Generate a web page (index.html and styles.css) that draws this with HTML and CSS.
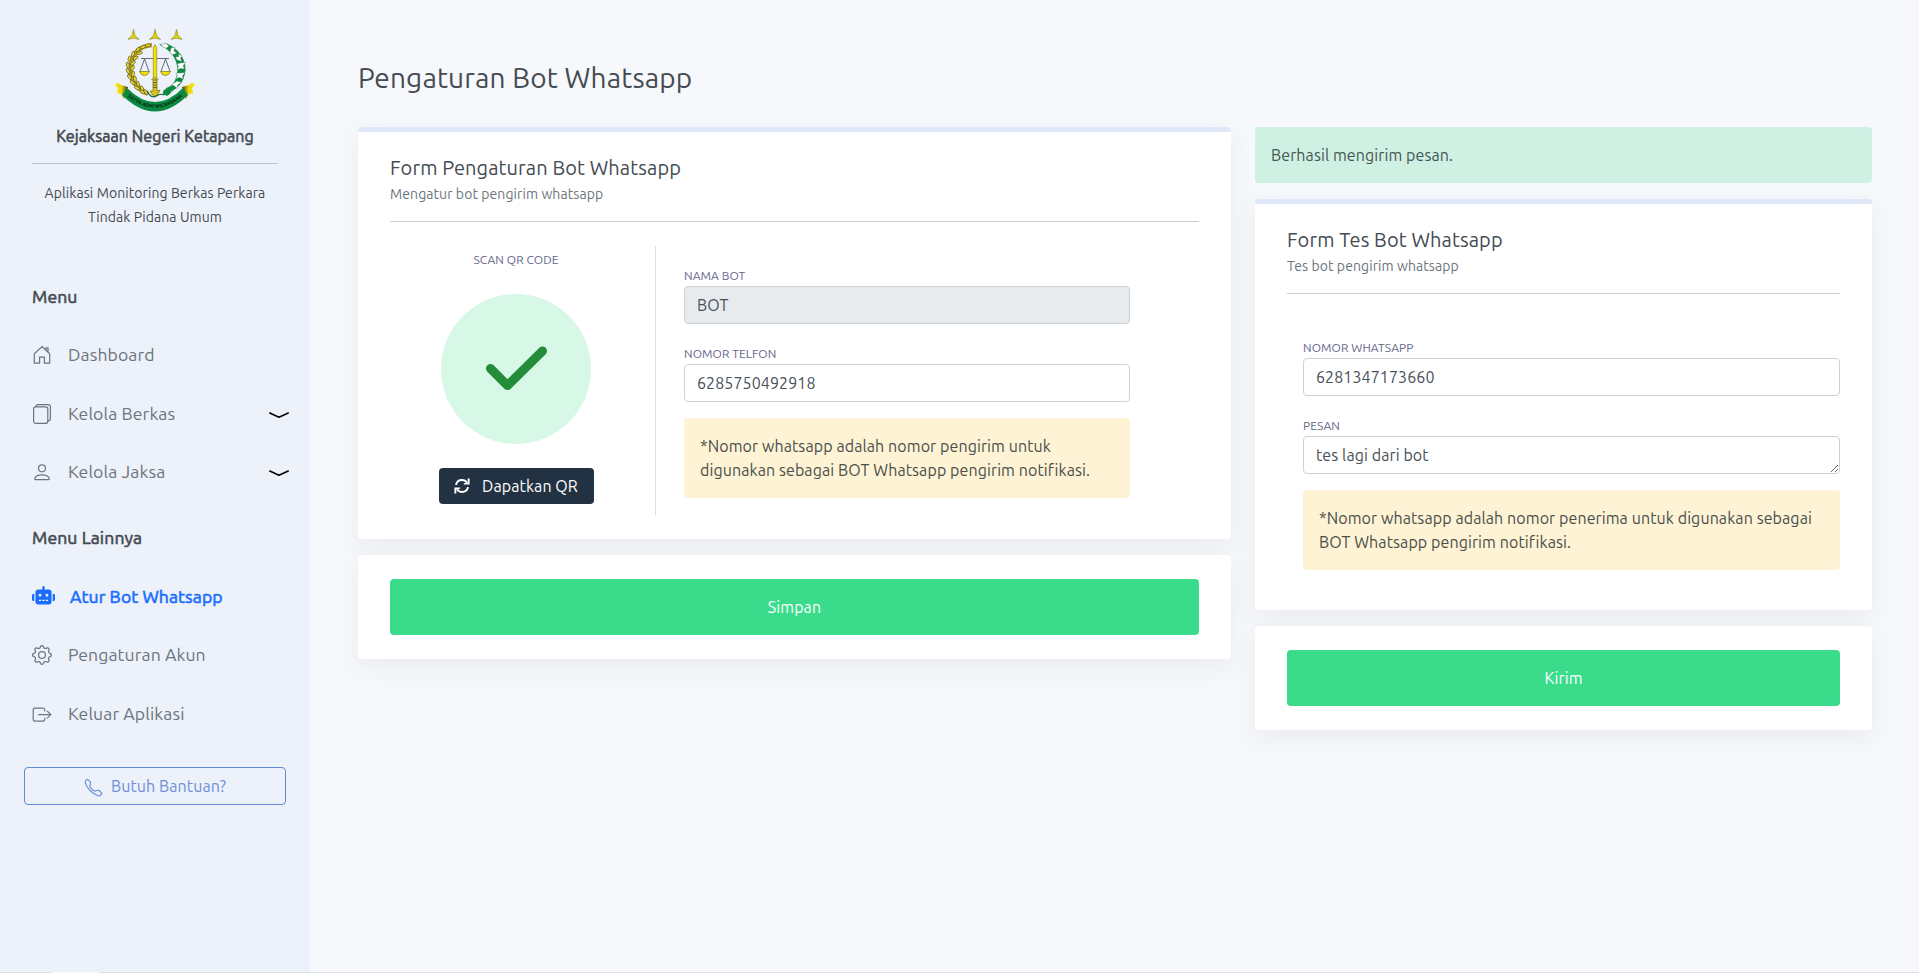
FILE: index.html
```html
<!DOCTYPE html>
<html lang="id">
<head>
<meta charset="utf-8">
<title>Pengaturan Bot Whatsapp</title>
<link rel="stylesheet" href="styles.css">
</head>
<body>
<div class="app">
  <aside class="sidebar">
    <header class="brand">
      <svg class="emblem" viewBox="0 0 82 84" width="82" height="84">
        <defs>
          <g id="star"><path d="M0-5.6 1.600 .8 5.600 4.400 0 3.200-5.600 4.400-1.600 .8Z" fill="#f2e200" stroke="#6b6a22" stroke-width=".5"/><path d="M0-4V1.200L-4 3.600M0 1.200 4 3.600" fill="none" stroke="#a39c1c" stroke-width=".4"/></g>
          <g id="grain"><ellipse rx="2.900" ry="1.400" fill="#ead82a" stroke="#4a4520" stroke-width=".6"/></g>
          <path id="motto" d="M10 65.500Q41 94 72 65.500"/>
          <linearGradient id="curlL"><stop offset="0" stop-color="#f6e800"/><stop offset=".5" stop-color="#e8d510"/><stop offset="1" stop-color="#3b3810"/></linearGradient>
          <linearGradient id="curlR"><stop offset="0" stop-color="#3b3810"/><stop offset=".5" stop-color="#e8d510"/><stop offset="1" stop-color="#f6e800"/></linearGradient>
        </defs>
        <use href="#star" x="19.500" y="7"/><use href="#star" x="41" y="7"/><use href="#star" x="62.500" y="7"/>
        <path d="M38 17Q17 19 16.500 42 17.500 58 34 66" fill="none" stroke="#b3a32a" stroke-width="4.500"/>
        <g>
          <use href="#grain" transform="translate(34 17.500) rotate(-14)"/><use href="#grain" transform="translate(29 19) rotate(-30)"/>
          <use href="#grain" transform="translate(24 21.500) rotate(-55)"/><use href="#grain" transform="translate(25.500 25) rotate(-15)"/>
          <use href="#grain" transform="translate(19 26) rotate(-70)"/><use href="#grain" transform="translate(21.500 30) rotate(-28)"/>
          <use href="#grain" transform="translate(15.500 31) rotate(-85)"/><use href="#grain" transform="translate(19 35) rotate(-45)"/>
          <use href="#grain" transform="translate(13.800 37) rotate(75)"/><use href="#grain" transform="translate(18.500 40) rotate(-60)"/>
          <use href="#grain" transform="translate(14 43) rotate(65)"/><use href="#grain" transform="translate(19 46) rotate(-75)"/>
          <use href="#grain" transform="translate(15.500 49) rotate(55)"/><use href="#grain" transform="translate(21 51) rotate(88)"/>
          <use href="#grain" transform="translate(18.500 54.500) rotate(42)"/><use href="#grain" transform="translate(24 56) rotate(75)"/>
          <use href="#grain" transform="translate(23 60) rotate(35)"/><use href="#grain" transform="translate(28 60.500) rotate(62)"/>
          <use href="#grain" transform="translate(28.500 64) rotate(28)"/><use href="#grain" transform="translate(32 64) rotate(48)"/>
        </g>
        <path d="M45 16.500 53 15.500Q71 24 71.500 42 70 60 50 67L49 63Q63 57 63.500 42 63 25 45 16.500Z" fill="#0c8a41"/>
        <g fill="#fff" stroke="#3d7355" stroke-width=".4">
          <path id="boll" d="M46 16.500 52 15.500 55 18 52 20.500Z"/>
          <path d="M57 20 61 19 60 23 63 25 58 27 56 24ZM64 25.500 68 28 66.500 30.500 68 33.500 63 32 61.500 29 65 28.500ZM66 35 71.500 34.500 69 38 71 41 66.500 40.500 63 42 64.500 38.500 63 36ZM66 45 71 44.500 68.500 48 69.500 51 65 49.500 61.500 51 63.500 47.500 62 45ZM63 53 67.500 54.500 64 56.500 63 60.500 60 57.500 56.500 57.500 60 55ZM55 60 59 63 55.500 65 52 64Z"/>
        </g>
        <path d="M49 66Q50 60 56 58.500 61 63 53 68Z" fill="#0c8a41"/>
        <path d="M27 30.500H55M30.500 31 26 43.500M30.500 31 35 43.500M51.500 31 47 43.500M51.500 31 56 43.500" fill="none" stroke="#444a50" stroke-width=".8"/>
        <path d="M25.500 43.500H35.500Q34 47.500 30.500 47.500T25.500 43.500ZM46.500 43.500H56.500Q55 47.500 51.500 47.500T46.500 43.500Z" fill="#f2e200" stroke="#77731c" stroke-width=".7"/>
        <path d="M39.300 20 41 16.500 42.700 20V50H39.300Z" fill="#f2e200" stroke="#8a7a18" stroke-width=".6"/>
        <path d="M37.500 51.500 39 50H43L44.500 51.500Z" fill="#e8d510" stroke="#77731c" stroke-width=".5"/>
        <path d="M39 52H43V63L46 62 43.500 67 41 69 38.500 67 36 63 39 63Z" fill="#d8c414" stroke="#5b5420" stroke-width=".6"/>
        <path d="M39 54.500H43M39 57H43M39 59.500H43" stroke="#5b5420" stroke-width=".8"/>
        <path d="M33 63Q37 71 42 68T50 67" fill="none" stroke="#0b5f30" stroke-width="1.100"/>
        <path d="M1 57Q3 53 7 57L14 59 10 71 7 66 3 65 4 60Z" fill="url(#curlL)"/>
        <path d="M81 57Q79 53 75 57L68 59 72 71 75 66 79 65 78 60Z" fill="url(#curlR)"/>
        <path d="M13 60Q41 88 69 60L74 67Q41 100 8 67Z" fill="#0c8a41"/>
        <text class="motto"><textPath href="#motto" startOffset="50%" text-anchor="middle">SATYA ADHI WICAKSANA</textPath></text>
      </svg>
      <div class="brand-name bold">Kejaksaan Negeri Ketapang</div>
      <div class="brand-desc">Aplikasi Monitoring Berkas Perkara Tindak Pidana Umum</div>
    </header>

    <div class="menu-title bold">Menu</div>
    <nav class="menu">
      <a class="item"><svg class="icon" viewBox="0 0 20 20"><path d="M2.300 18.200V8.700L10 1.500l7.700 7.200v9.500h-5.300v-6h-4.800v6zM14 5V2.800h2V7"/></svg>Dashboard</a>
      <a class="item"><svg class="icon" viewBox="0 0 20 20"><rect x="1.600" y="2.900" width="14.200" height="16.500" rx="2.200"/><path d="M4 2.900C4 1.500 5 .6 6.200.6h9.800c1.300 0 2.400 1 2.400 2.400v11.500c0 1.400-1 2.400-2.500 2.400"/></svg>Kelola Berkas<svg class="chevron" viewBox="0 0 20 7"><path d="M.8 1 10 5.300 19.200 1"/></svg></a>
      <a class="item"><svg class="icon" viewBox="0 0 20 20"><circle cx="10" cy="6.300" r="3.500"/><path d="M3.400 17.600c-.7 0-.8-.6-.6-1.300.6-2 3.500-3.400 7.200-3.400s6.600 1.400 7.200 3.400c.2.700 0 1.300-.6 1.300z"/></svg>Kelola Jaksa<svg class="chevron" viewBox="0 0 20 7"><path d="M.8 1 10 5.300 19.200 1"/></svg></a>
    </nav>

    <div class="menu-title second bold">Menu Lainnya</div>
    <nav class="menu">
      <a class="item active bold"><svg class="robot" viewBox="0 0 640 512"><path d="M32,224H64V416H32A31.966,31.966,0,0,1,0,384V256A31.966,31.966,0,0,1,32,224Zm512-48V448a64.063,64.063,0,0,1-64,64H160a64.063,64.063,0,0,1-64-64V176a79.974,79.974,0,0,1,80-80H288V32a32,32,0,0,1,64,0V96H464A79.974,79.974,0,0,1,544,176ZM264,256a40,40,0,1,0-40,40A39.997,39.997,0,0,0,264,256Zm-8,128H192v32h64Zm96,0H288v32h64ZM456,256a40,40,0,1,0-40,40A39.997,39.997,0,0,0,456,256Zm-8,128H384v32h64ZM640,256V384a31.966,31.966,0,0,1-32,32H576V224h32A31.966,31.966,0,0,1,640,256Z"/></svg>Atur Bot Whatsapp</a>
      <a class="item"><svg class="icon solid" viewBox="0 0 16 16"><path d="M8 4.754a3.246 3.246 0 1 0 0 6.492 3.246 3.246 0 0 0 0-6.492zM5.754 8a2.246 2.246 0 1 1 4.492 0 2.246 2.246 0 0 1-4.492 0z"/><path d="M9.796 1.343c-.527-1.790-3.065-1.790-3.592 0l-.094.319a.873.873 0 0 1-1.255.520l-.292-.160c-1.640-.892-3.433.902-2.540 2.541l.159.292a.873.873 0 0 1-.520 1.255l-.319.094c-1.790.527-1.790 3.065 0 3.592l.319.094a.873.873 0 0 1 .520 1.255l-.160.292c-.892 1.640.901 3.434 2.541 2.540l.292-.159a.873.873 0 0 1 1.255.520l.094.319c.527 1.790 3.065 1.790 3.592 0l.094-.319a.873.873 0 0 1 1.255-.520l.292.160c1.640.893 3.434-.902 2.540-2.541l-.159-.292a.873.873 0 0 1 .520-1.255l.319-.094c1.790-.527 1.790-3.065 0-3.592l-.319-.094a.873.873 0 0 1-.520-1.255l.160-.292c.893-1.640-.902-3.433-2.541-2.540l-.292.159a.873.873 0 0 1-1.255-.520l-.094-.319zm-2.633.283c.246-.835 1.428-.835 1.674 0l.094.319a1.873 1.873 0 0 0 2.693 1.115l.291-.160c.764-.415 1.600.420 1.184 1.185l-.159.292a1.873 1.873 0 0 0 1.116 2.692l.318.094c.835.246.835 1.428 0 1.674l-.319.094a1.873 1.873 0 0 0-1.115 2.693l.160.291c.415.764-.420 1.600-1.185 1.184l-.291-.159a1.873 1.873 0 0 0-2.693 1.116l-.094.318c-.246.835-1.428.835-1.674 0l-.094-.319a1.873 1.873 0 0 0-2.692-1.115l-.292.160c-.764.415-1.600-.420-1.184-1.185l.159-.291A1.873 1.873 0 0 0 1.945 8.930l-.319-.094c-.835-.246-.835-1.428 0-1.674l.319-.094A1.873 1.873 0 0 0 3.060 4.377l-.160-.292c-.415-.764.420-1.600 1.185-1.184l.292.159a1.873 1.873 0 0 0 2.692-1.115l.094-.319z"/></svg>Pengaturan Akun</a>
      <a class="item"><svg class="icon" viewBox="0 0 20 20"><path d="M12.800 7.500V6c0-1.200-.6-1.900-1.800-1.900H3C1.800 4.100 1.200 4.800 1.200 6v9.300c0 1.200.6 1.900 1.800 1.900h8c1.200 0 1.800-.7 1.800-1.900v-1.600M6.200 10.600h12.400M15 6.800l3.800 3.800-3.800 3.800"/></svg>Keluar Aplikasi</a>
    </nav>

    <a class="help"><svg class="phone" viewBox="0 0 16 16"><path d="M3.600 1.500c-.4-.5-1-.5-1.400-.1L1.500 2.300c-.5.500-.6 1.200-.4 1.800a17.500 17.500 0 0 0 4.200 6.600 17.500 17.500 0 0 0 6.600 4.200c.6.200 1.300 0 1.800-.4l1-1c.4-.4.300-1-.1-1.300l-2.300-1.800c-.2-.1-.5-.2-.8-.1l-2 .5c-.6.200-1.300 0-1.700-.4L5.500 8.100c-.5-.5-.6-1.100-.5-1.700l.5-2.100c.1-.3 0-.6-.1-.8z"/></svg>Butuh Bantuan?</a>
  </aside>

  <main class="main">
    <h1 class="page-title">Pengaturan Bot Whatsapp</h1>
    <div class="columns">
      <div class="col-wide">
        <section class="card topped">
          <h2 class="card-title">Form Pengaturan Bot Whatsapp</h2>
          <p class="card-sub">Mengatur bot pengirim whatsapp</p>
          <div class="split">
            <div class="qr">
              <div class="label">SCAN QR CODE</div>
              <div class="circle"><svg viewBox="0 0 150 150"><path d="M49.500 74.500 66.500 91.500 101.500 57"/></svg></div>
              <button class="qr-btn"><svg viewBox="0 0 16 16"><path d="M2 6.900C2.600 3.900 5 2 8 2c2.200 0 3.900 1 5 2.700M14 9.100C13.400 12.100 11 14 8 14c-2.200 0-3.900-1-5-2.700"/><path class="head" d="M15.600.4v6H9.800V5.200l3.900-.4V.4zM.4 15.600v-6h5.800v1.200l-3.900.4v4.400z"/></svg>Dapatkan QR</button>
            </div>
            <div class="fields">
              <label class="label">NAMA BOT</label>
              <div class="input disabled">BOT</div>
              <label class="label">NOMOR TELFON</label>
              <div class="input">6285750492918</div>
              <div class="alert warning">*Nomor whatsapp adalah nomor pengirim untuk digunakan sebagai BOT Whatsapp pengirim notifikasi.</div>
            </div>
          </div>
        </section>
        <section class="card action"><button class="submit">Simpan</button></section>
      </div>

      <div class="col-narrow">
        <div class="alert success">Berhasil mengirim pesan.</div>
        <section class="card topped">
          <h2 class="card-title">Form Tes Bot Whatsapp</h2>
          <p class="card-sub">Tes bot pengirim whatsapp</p>
          <div class="fields test">
            <label class="label">NOMOR WHATSAPP</label>
            <div class="input">6281347173660</div>
            <label class="label">PESAN</label>
            <textarea class="input" rows="1">tes lagi dari bot</textarea>
            <div class="alert warning">*Nomor whatsapp adalah nomor penerima untuk digunakan sebagai BOT Whatsapp pengirim notifikasi.</div>
          </div>
        </section>
        <section class="card action"><button class="submit">Kirim</button></section>
      </div>
    </div>
  </main>
</div>
<div class="bottom-line"></div>
</body>
</html>
```
FILE: styles.css
```css
* { box-sizing: border-box; }
body { margin: 0; font: 16px/24px Ubuntu, "Noto Sans", sans-serif; color: #444b52; background: #f6f8fc; overflow: hidden; }
.app { display: flex; height: 972px; }
.app * { letter-spacing: .0058em; }
.bottom-line { height: 1px; background: linear-gradient(90deg, #dcdee2 51px, #f6f8fc 51px 99px, #dcdee2 99px); }
.bold { -webkit-text-stroke: .6px currentColor; }
h1, h2, p { margin: 0; font-weight: 400; }

.sidebar { width: 310px; flex: none; background: #ecf1fa; padding: 28px 24px 0; display: flex; flex-direction: column; }
.brand { display: flex; flex-direction: column; align-items: center; text-align: center; padding: 0 8px; }
.emblem { display: block; }
.app .motto { font-size: 5px; font-weight: 700; fill: #042410; letter-spacing: .3px; }
.brand-name { margin-top: 12px; }
.brand-desc { align-self: stretch; margin-top: 15px; padding-top: 17px; border-top: 1px solid #bfc4cd; font-size: 14px; }
.menu-title { margin: 55px 0 0 8px; font-size: 17.600px; line-height: 26px; }
.menu-title.second { margin-top: 40px; }
.menu { display: flex; flex-direction: column; gap: 32.300px; margin: 32.300px -3px 0 8px; }
.second + .menu { margin-top: 33.300px; }
.item { display: flex; align-items: center; height: 26px; font-size: 17.600px; color: #6c757d; }
.icon { width: 20px; height: 20px; margin-right: 16px; fill: none; stroke: currentColor; stroke-width: 1.200; overflow: visible; }
.icon.solid { fill: currentColor; stroke: none; }
.chevron { width: 20px; height: 7px; margin: 3px 0 0 auto; fill: none; stroke: #000; stroke-width: 1.600; stroke-linecap: round; stroke-linejoin: round; }
.active { color: #1a6dff; }
.robot { width: 23px; height: 18.400px; margin: -3px 15px 0 0; fill: currentColor; }
.help { display: flex; align-items: center; justify-content: center; height: 38px; margin-top: 40px; border: 1px solid #5f8bd3; border-radius: 4px; color: #6f8fdb; }
.phone { width: 19px; height: 19px; margin: 4px 8px 0 0; fill: none; stroke: currentColor; stroke-width: 1; }

.main { flex: 1; padding: 57px 47px 0 48px; }
.page-title { font-size: 28px; line-height: 42px; }
.columns { display: flex; align-items: flex-start; gap: 24px; margin-top: 28px; }
.col-wide { width: 873px; }
.col-narrow { width: 617px; }
.col-wide, .col-narrow { display: flex; flex-direction: column; gap: 16px; }
.card { padding: 24px 32px; background: #fff; border-radius: 4px; box-shadow: 0 8px 24px rgba(70, 70, 60, .07); }
.topped { border-top: 5px solid #dfe8f9; }
.card-title { font-size: 20px; line-height: 24px; }
.card-sub { padding-bottom: 15px; margin-top: 2px; border-bottom: 1px solid #cbcdd0; font-size: 14px; line-height: 24px; color: #6c757d; }
.split { display: flex; margin-top: 24px; height: 269px; }
.qr { width: 266px; padding: 4px 13px 0 0; border-right: 1px solid #dcdee1; display: flex; flex-direction: column; align-items: center; }
.label { display: block; font-size: 12px; line-height: 20px; color: #65658a; }
.circle { width: 150px; height: 150px; margin: 24px 0; border-radius: 50%; background: #d7f7e7; flex: none; }
.circle svg { display: block; fill: none; stroke: #258c3a; stroke-width: 9; stroke-linecap: round; stroke-linejoin: round; }
.qr-btn { display: flex; align-items: center; justify-content: center; width: 155px; height: 36px; border: 0; border-radius: 4px; background: #233242; color: #fff; font: inherit; gap: 12px; }
.qr-btn svg { width: 16px; height: 16px; fill: none; stroke: #fff; stroke-width: 2; }
.qr-btn .head { fill: #fff; stroke: none; }
.fields { flex: 1; padding: 20px 69px 0 28px; }
.fields .input + .label { margin-top: 20px; }
.input { display: block; width: 100%; height: 38px; padding: 6px 12px; border: 1px solid #cdd2d7; border-radius: 4px; background: #fff; font: inherit; color: #495057; }
.input.disabled { background: #e8ebee; }
.alert { padding: 16px; border-radius: 4px; }
.warning { margin-top: 16px; background: #fef3d4; color: #4b4f4c; }
.success { background: #cff1e3; color: #445753; }
.test { padding: 44px 0 16px 16px; }
.submit { display: block; width: 100%; height: 56px; border: 0; border-radius: 4px; background: #3adc8b; color: #fff; font: inherit; }
```
